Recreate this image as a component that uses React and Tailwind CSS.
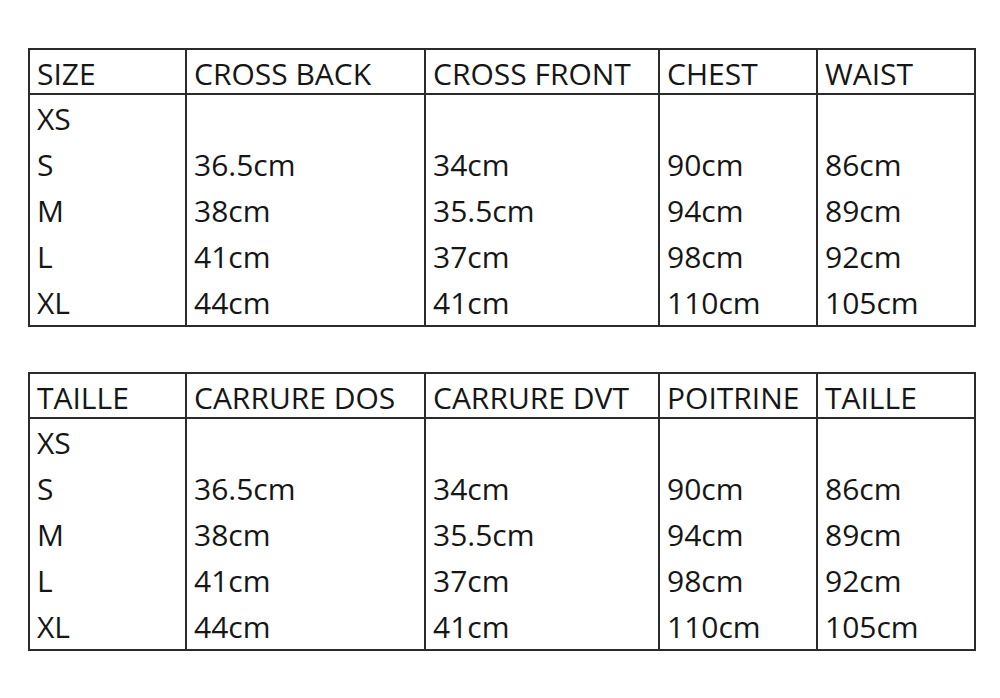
import React from "react";

const tables = [
  {
    head: ["SIZE", "CROSS BACK", "CROSS FRONT", "CHEST", "WAIST"],
  },
  {
    head: ["TAILLE", "CARRURE DOS", "CARRURE DVT", "POITRINE", "TAILLE"],
  },
];

const rows = [
  ["XS", "", "", "", ""],
  ["S", "36.5cm", "34cm", "90cm", "86cm"],
  ["M", "38cm", "35.5cm", "94cm", "89cm"],
  ["L", "41cm", "37cm", "98cm", "92cm"],
  ["XL", "44cm", "41cm", "110cm", "105cm"],
];

const cols = "grid grid-cols-[155px_239px_234px_158px_158px]";

const SizeTable = ({ head }) => (
  <div className="w-[948px] border-2 border-[#2b2b2b]">
    <div className={`${cols} border-b-2 border-[#2b2b2b]`}>
      {head.map((h, i) => (
        <div
          key={i}
          className={`h-[43px] pt-[2px] pl-[7px] leading-[43px] whitespace-nowrap ${i > 0 ? "border-l-2 border-[#2b2b2b]" : ""}`}
        >
          {h}
        </div>
      ))}
    </div>
    {rows.map((r, ri) => (
      <div key={ri} className={cols}>
        {r.map((c, i) => (
          <div
            key={i}
            className={`h-[46px] pt-[2px] pl-[7px] leading-[44px] whitespace-nowrap ${i > 0 ? "border-l-2 border-[#2b2b2b]" : ""}`}
          >
            {c}
          </div>
        ))}
      </div>
    ))}
  </div>
);

const App = () => {
  return (
    <div
      className="w-[1000px] h-[698px] bg-white text-[#161616] text-[30px] pt-[48px] pl-[28px]"
      style={{ fontFamily: '"Open Sans", "Liberation Sans", sans-serif' }}
    >
      <div className="flex flex-col gap-[45px]">
        {tables.map((t, i) => (
          <SizeTable key={i} head={t.head} />
        ))}
      </div>
    </div>
  );
};

export default App;
